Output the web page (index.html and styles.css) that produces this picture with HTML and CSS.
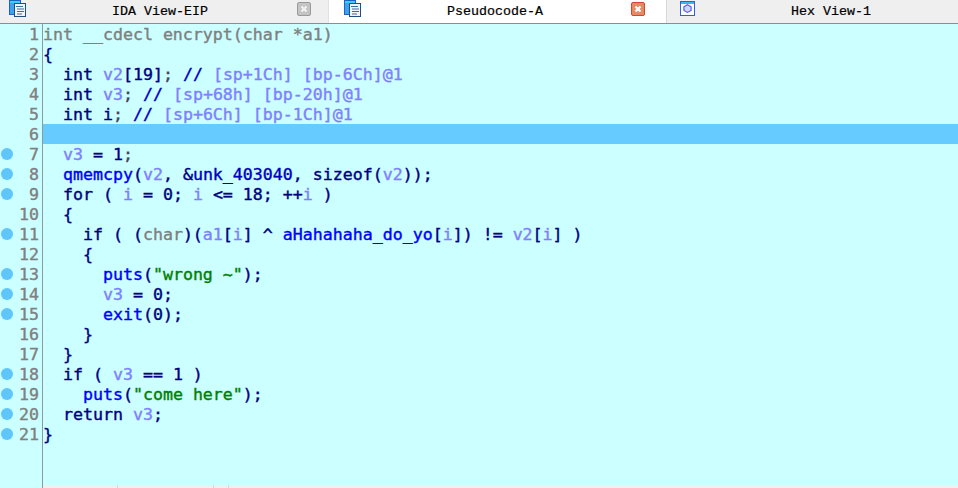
FILE: index.html
```html
<!DOCTYPE html>
<html lang="en">
<head>
<meta charset="utf-8">
<title>Pseudocode-A</title>
<link rel="stylesheet" href="styles.css">
</head>
<body>
<div class="tabs">
  <div class="tab tab-a">
    <svg class="icon" width="17" height="17" viewBox="0 0 17 17"><rect x="0.5" y="0.5" width="11" height="14" fill="#3fa0f0" stroke="#1c62c8"/><rect x="1" y="1" width="10" height="2" fill="#38d0f8"/><rect x="5.5" y="3.500" width="11" height="13" fill="#eef4fb" stroke="#1b4f86"/><path d="M7 6.500h7M8 9h7M8 11.500h7M8 14h5" stroke="#3a6ea5"/></svg>
    <span class="title">IDA View-EIP</span>
    <svg class="close" width="14" height="14" viewBox="0 0 14 14"><rect x="0.5" y="0.5" width="13" height="13" rx="1.5" fill="#c4c4c4" stroke="#9a9a9a"/><path d="M4.500 4.500l5 5M9.500 4.500l-5 5" stroke="#f2f2f2" stroke-width="2.2"/></svg>
  </div>
  <div class="tab tab-b">
    <svg class="icon" width="17" height="17" viewBox="0 0 17 17"><rect x="0.5" y="0.5" width="11" height="14" fill="#3fa0f0" stroke="#1c62c8"/><rect x="1" y="1" width="10" height="2" fill="#38d0f8"/><rect x="5.5" y="3.500" width="11" height="13" fill="#eef4fb" stroke="#1b4f86"/><path d="M7 6.500h7M8 9h7M8 11.500h7M8 14h5" stroke="#3a6ea5"/></svg>
    <span class="title">Pseudocode-A</span>
    <svg class="close" width="14" height="14" viewBox="0 0 14 14"><rect x="0.5" y="0.5" width="13" height="13" rx="1.5" fill="#e58a64" stroke="#d4452e"/><path d="M4.500 4.500l5 5M9.500 4.500l-5 5" stroke="#fff" stroke-width="2.2"/></svg>
  </div>
  <div class="tab tab-c">
    <svg class="icon" width="15" height="15" viewBox="0 0 15 15"><rect x="0.5" y="0.5" width="14" height="14" fill="#fff" stroke="#2a62e0"/><rect x="1" y="1" width="13" height="2" fill="#38b8f8"/><path d="M7.500 3.800l3.600 2v3.600l-3.600 2-3.600-2V5.800z" fill="#d0d4ff" stroke="#5a5ae8" stroke-width="1.2"/></svg>
    <span class="title">Hex View-1</span>
  </div>
</div>
<div class="editor">
  <div class="gutter">
    <div class="num">1</div>
    <div class="num">2</div>
    <div class="num">3</div>
    <div class="num">4</div>
    <div class="num">5</div>
    <div class="num">6</div>
    <div class="num bp">7</div>
    <div class="num bp">8</div>
    <div class="num bp">9</div>
    <div class="num">10</div>
    <div class="num bp">11</div>
    <div class="num">12</div>
    <div class="num bp">13</div>
    <div class="num bp">14</div>
    <div class="num bp">15</div>
    <div class="num">16</div>
    <div class="num">17</div>
    <div class="num bp">18</div>
    <div class="num bp">19</div>
    <div class="num bp">20</div>
    <div class="num bp">21</div>
  </div>
  <div class="main">
    <div class="code">
<div class="line g">int __cdecl encrypt(char *a1)</div>
<div class="line">{</div>
<div class="line">  int <i>v2</i>[19]<u>;</u> <b class="d">//</b> <i>[sp+1Ch] [bp-6Ch]@1</i></div>
<div class="line">  int <i>v3</i><u>;</u> <b class="d">//</b> <i>[sp+68h] [bp-20h]@1</i></div>
<div class="line">  int i<u>;</u> <b class="d">//</b> <i>[sp+6Ch] [bp-1Ch]@1</i></div>
<div class="line hl"> </div>
<div class="line">  <i>v3</i> = 1<u>;</u></div>
<div class="line">  <b>qmemcpy</b>(<i>v2</i>, &amp;<b class="d">unk_403040</b>, sizeof(<i>v2</i>));</div>
<div class="line">  for ( <i>i</i> = 0; <i>i</i> &lt;= 18; ++<i>i</i> )</div>
<div class="line">  {</div>
<div class="line">    if ( (<s>char</s>)(<i>a1</i>[<i>i</i>] ^ <b>aHahahaha_do_yo</b>[<i>i</i>]) != <i>v2</i>[<i>i</i>] )</div>
<div class="line">    {</div>
<div class="line">      <b>puts</b>(<em>"wrong ~"</em>);</div>
<div class="line">      <i>v3</i> = 0;</div>
<div class="line">      <b>exit</b>(0);</div>
<div class="line">    }</div>
<div class="line">  }</div>
<div class="line">  if ( <i>v3</i> == 1 )</div>
<div class="line">    <b>puts</b>(<em>"come here"</em>);</div>
<div class="line">  return <i>v3</i>;</div>
<div class="line">}</div>
    </div>
    <div class="strip"><span class="cell c1"></span><span class="cell c2"></span><span class="cell c3"></span></div>
  </div>
</div>
</body>
</html>
```
FILE: styles.css
```css
* { box-sizing: border-box; }
html, body { margin: 0; height: 100%; overflow: hidden; }
body { display: flex; flex-direction: column; width: 958px; height: 488px; background: #ccffff; }

.tabs { display: flex; height: 24px; flex: none; border-bottom: 1px solid #8c8c96; font: 13.33px "Liberation Mono", monospace; color: #000; -webkit-text-stroke: 0.2px #000; }
.tab { position: relative; display: flex; align-items: center; height: 23px; }
.tab-a { width: 329px; background: #efefef; border-right: 1px solid #e2e2e2; padding-left: 112px; }
.tab-b { width: 337px; background: #fff; padding-left: 118px; }
.tab-c { width: 292px; background: #efefef; border-left: 1px solid #d8d8d8; padding-left: 124px; }
.title { white-space: pre; }
.tab .icon { position: absolute; top: 0; left: 9px; }
.tab-b .icon { left: 15px; }
.tab-c .icon { left: 13px; top: 1px; }
.tab .close { position: absolute; top: 2px; left: 297px; }
.tab-b .close { left: 302px; }

.editor { flex: 1; display: flex; min-height: 0; font: 16.6px/22px "DejaVu Sans Mono", monospace; -webkit-text-stroke: 0.4px; }
.gutter { width: 43px; flex: none; border-right: 1px solid #8e9a9a; padding-right: 3px; color: #808080; }
.num { position: relative; height: 20px; text-align: right; }
.num.bp::before { content: ""; position: absolute; left: 1px; top: 4px; width: 12px; height: 12px; border-radius: 50%; background: #5fc6fb; }
.main { flex: 1; display: flex; flex-direction: column; min-width: 0; }
.code { flex: 1; color: #000080; }
.line { height: 20px; white-space: pre; }
.line i { font-style: normal; color: #8080ff; }
.line b { font-weight: normal; color: #0000ff; }
.line b.d { color: #0000c0; }
.line u { text-decoration: none; color: #404060; }
.line s { text-decoration: none; color: #808080; }
.line em { font-style: normal; color: #008000; }
.line.g { color: #808080; }
.hl { background: #66ccff; }
.strip { height: 3px; flex: none; background: #f0f0f0; display: flex; }
.cell { height: 3px; border-right: 1px solid #d8d8d8; }
.c1 { width: 75px; }
.c2 { width: 96px; }
.c3 { width: 15px; }
```
